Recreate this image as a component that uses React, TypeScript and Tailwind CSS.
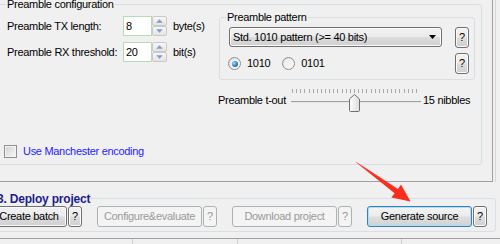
import React from "react";

const btnBase =
  "flex items-center justify-center h-[21px] rounded-[3px] border shrink-0";
const btnEnabled =
  "border-[#707070] text-black bg-[linear-gradient(180deg,#f2f2f2_0%,#ebebeb_48%,#dddddd_52%,#cfcfcf_100%)] shadow-[inset_0_0_0_1px_#fbfbfb]";
const btnDisabled = "border-[#adb2b5] text-[#9a9a9a] bg-[#f4f4f4]";

function QBtn({ disabled, className = "" }: { disabled?: boolean; className?: string }) {
  return (
    <div className={`${btnBase} w-[14px] ${disabled ? btnDisabled : btnEnabled} ${className}`}>?</div>
  );
}

function Spinner() {
  const half =
    "h-[10px] border border-[#c9c9c9] rounded-[2px] bg-[linear-gradient(180deg,#f7f7f7,#e3e3e3)] flex items-center justify-center";
  return (
    <div className="flex flex-col w-[15px] h-[20px] shrink-0">
      <div className={half}>
        <svg width="7" height="4" viewBox="0 0 7 4">
          <path d="M3.5 0.2L6.8 3.8H0.2Z" fill="#7f9ccb" />
        </svg>
      </div>
      <div className={half}>
        <svg width="7" height="4" viewBox="0 0 7 4">
          <path d="M3.5 3.8L6.8 0.2H0.2Z" fill="#7f9ccb" />
        </svg>
      </div>
    </div>
  );
}

function NumRow({ label, value, unit }: { label: string; value: string; unit: string }) {
  return (
    <div className="flex items-center h-[20px]">
      <div className="w-[116px]">{label}</div>
      <div className="w-[29px] h-[20px] border border-[#b6dcb6] bg-white pl-[2px] flex items-center shrink-0">
        {value}
      </div>
      <Spinner />
      <div className="ml-[6px]">{unit}</div>
    </div>
  );
}

function Radio({ checked }: { checked?: boolean }) {
  return (
    <div className="w-[13px] h-[13px] rounded-full border border-[#8e8f8f] bg-[linear-gradient(135deg,#d9d9d9,#ffffff)] flex items-center justify-center shrink-0">
      <div className="w-[9px] h-[9px] rounded-full bg-[linear-gradient(135deg,#ececec,#f9f9f9)] flex items-center justify-center">
        {checked && (
          <div className="w-[6px] h-[6px] rounded-full bg-[radial-gradient(circle_at_35%_35%,#9fe0ff,#2d7ec4_55%,#124f8f)]" />
        )}
      </div>
    </div>
  );
}

function Slider() {
  const ticks = [];
  for (let i = 0; i <= 30; i++) {
    ticks.push(<rect key={i} x={1 + Math.round(i * 4.133)} y={1} width={1} height={4} fill="#a8a8a8" />);
  }
  return (
    <svg width="130" height="25" viewBox="0 0 130 25" className="shrink-0">
      {ticks}
      <rect x="0" y="13" width="130" height="1" fill="#a0a0a0" />
      <rect x="0" y="14" width="130" height="1" fill="#e6e6e6" />
      <defs>
        <linearGradient id="th" x1="0" y1="0" x2="1" y2="0">
          <stop offset="0" stopColor="#fdfdfd" />
          <stop offset="1" stopColor="#dcdcdc" />
        </linearGradient>
      </defs>
      <path
        d="M58.5 11 L63.5 6.5 L68.5 11 L68.5 22.5 Q68.5 23.5 67.5 23.5 L59.5 23.5 Q58.5 23.5 58.5 22.5 Z"
        fill="url(#th)"
        stroke="#6f6f6f"
        strokeWidth="1"
      />
    </svg>
  );
}

export default function App() {
  return (
    <div className="relative w-[500px] h-[244px] overflow-hidden bg-[#f0f0f0] font-['Liberation_Sans',Arial,sans-serif] text-[11px] leading-[13px] tracking-[-0.3px] text-black">
      {/* tab page */}
      <div className="flex">
        <div className="w-[493px] h-[182px] border-r border-b border-[#a0a0a0] pt-[4px]">
          {/* Preamble configuration group */}
          <div className="ml-[-4px] w-[486px] h-[161px] border border-[#d5dfe5] rounded-[3px] flex flex-col">
            <div className="-mt-[7px] ml-[9px] px-[1px] w-fit bg-[#f0f0f0]">Preamble configuration</div>
            <div className="mt-[5px] pl-[10px] flex items-start">
              <div className="w-[212px] flex flex-col gap-[6px] shrink-0">
                <NumRow label="Preamble TX length:" value="8" unit="byte(s)" />
                <NumRow label="Preamble RX threshold:" value="20" unit="bit(s)" />
              </div>
              {/* Preamble pattern group */}
              <div className="mt-[1px] w-[256px] h-[63px] border border-[#d5dfe5] rounded-[3px] flex flex-col shrink-0">
                <div className="-mt-[7px] ml-[6px] px-[1px] w-fit bg-[#f0f0f0]">Preamble pattern</div>
                <div className="mt-[3px] ml-[9px] mr-[5px] flex items-start">
                  <div
                    className={`${btnEnabled} w-[213px] h-[20px] rounded-[3px] border flex items-center pl-[3px] pr-[5px]`}
                  >
                    <span className="flex-1">Std. 1010 pattern (&gt;= 40 bits)</span>
                    <svg width="7" height="4" viewBox="0 0 7 4">
                      <path d="M0 0H7L3.5 4Z" fill="#000" />
                    </svg>
                  </div>
                  <QBtn className="ml-auto h-[20px]" />
                </div>
                <div className="mt-[5px] ml-[8px] mr-[5px] flex items-center h-[21px]">
                  <Radio checked />
                  <span className="ml-[6px]">1010</span>
                  <div className="ml-[12px]">
                    <Radio />
                  </div>
                  <span className="ml-[6px]">0101</span>
                  <QBtn className="ml-auto" />
                </div>
              </div>
            </div>
            {/* slider row */}
            <div className="mt-[8px] ml-[221px] flex items-center h-[25px]">
              <div className="w-[73px]">Preamble t-out</div>
              <Slider />
              <div className="ml-[2px]">15 nibbles</div>
            </div>
            {/* checkbox row */}
            <div className="mt-[32px] ml-[7px] flex items-center h-[13px]">
              <div className="w-[13px] h-[13px] border border-[#8e8f8f] bg-[#f4f4f4] p-[1px] shrink-0">
                <div className="w-full h-full bg-[linear-gradient(135deg,#d3d3d3,#f7f7f7)]" />
              </div>
              <span className="ml-[6px] text-[#2323ff]">Use Manchester encoding</span>
            </div>
          </div>
        </div>
        <div className="ml-[2px] w-px h-[182px] bg-[#d8d8d8]" />
      </div>

      {/* Deploy project group */}
      <div className="mt-[16px] ml-[-12px] w-[508px] h-[34px] border border-[#d5dfe5] rounded-[3px] flex flex-col">
        <div className="-mt-[7px] ml-[7px] px-[1px] w-fit bg-[#f0f0f0] text-[12px] leading-[14px] font-bold tracking-[-0.2px] text-[#1d1d8f]">
          3. Deploy project
        </div>
        <div className="flex items-start ml-[2px]">
          <div className={`${btnBase} ${btnEnabled} w-[76px]`}>Create batch</div>
          <QBtn className="ml-[1px]" />
          <div className={`${btnBase} ${btnDisabled} w-[105px] ml-[15px]`}>Configure&amp;evaluate</div>
          <QBtn disabled className="ml-[1px]" />
          <div className={`${btnBase} ${btnDisabled} w-[105px] ml-[15px]`}>Download project</div>
          <QBtn disabled className="ml-[1px]" />
          <div
            className={`${btnBase} w-[105px] ml-[15px] border-[#3c7fb1] text-black bg-[linear-gradient(180deg,#f4f4f4_0%,#ececec_48%,#dedede_52%,#d2d2d2_100%)] shadow-[inset_0_0_0_1px_#a6e0fb]`}
          >
            Generate source
          </div>
          <QBtn className="ml-[1px]" />
        </div>
      </div>

      {/* status bar */}
      <div className="mt-[6px] h-[10px] border-t border-[#a0a0a0] flex">
        <div className="w-[133px] border-r border-[#d0d0d0]" />
        <div className="w-[105px] border-r border-[#d0d0d0]" />
        <div className="w-[164px] border-r border-[#d0d0d0]" />
      </div>

      {/* red arrow annotation */}
      <svg className="absolute left-0 top-0 pointer-events-none" width="500" height="244" viewBox="0 0 500 244">
        <polygon
          points="355.6,161.4 356.6,162.8 394.6,193.3 391.4,197.6 410.5,201.5 401,184.4 398,188.9"
          fill="#fa2e1e"
        />
      </svg>
    </div>
  );
}
